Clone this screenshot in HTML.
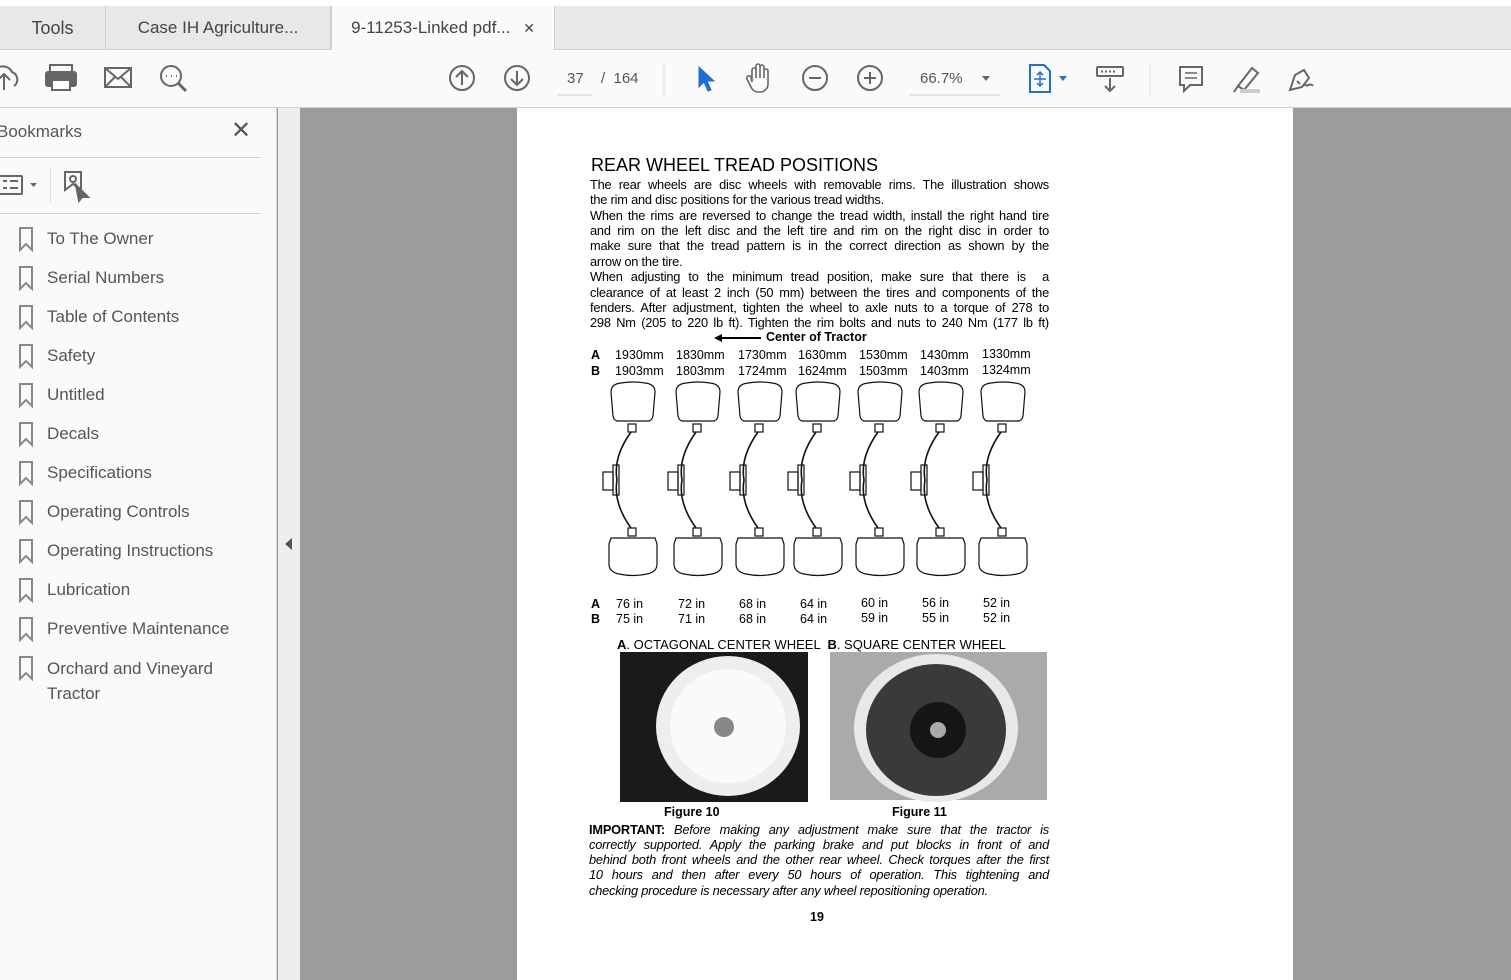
<!DOCTYPE html>
<html><head><meta charset="utf-8"><style>
*{margin:0;padding:0;box-sizing:border-box}
body{width:1511px;height:980px;overflow:hidden;background:#9c9c9c;font-family:"Liberation Sans",Arial,sans-serif;position:relative}
.a{position:absolute}
.ui{font-family:"Liberation Sans",sans-serif;color:#555}
.tab{position:absolute;top:6px;height:44px;line-height:44px;font-size:17px;color:#444;text-align:center;border-right:1px solid #d0d0d0}
.bm{position:absolute;left:47px;font-size:17px;color:#555}
.ln{position:absolute;left:590px;width:459px;font-size:12.8px;color:#000;text-align:justify;text-align-last:justify;white-space:nowrap;letter-spacing:-0.2px}
.ln.l{text-align-last:left}
.ti{position:absolute;left:589px;width:460px;font-size:12.8px;font-style:italic;text-align:justify;text-align-last:justify;white-space:nowrap;letter-spacing:-0.2px}
.r{position:absolute;font-size:12.5px;white-space:pre}
</style></head><body>
<div class="a" style="left:0;top:0;width:1511px;height:6px;background:#fff"></div>
<div class="a" style="left:0;top:6px;width:1511px;height:44px;background:#e8e8e8;border-bottom:1px solid #cfcfcf"></div>
<div class="tab" style="left:0;width:106px;font-size:18px">Tools</div>
<div class="tab" style="left:106px;width:225px">Case IH Agriculture...</div>
<div class="tab" style="left:331px;width:224px;background:#fafafa;height:45px;border-left:1px solid #cfcfcf">9-11253-Linked pdf... <span style="font-size:14px;margin-left:8px">✕</span></div>
<div class="a" style="left:0;top:50px;width:1511px;height:58px;background:#fafafa;border-bottom:1px solid #cfcfcf"></div>
<svg class="a" style="left:0;top:50px" width="1511" height="58" fill="none" stroke="#666" stroke-width="2">
<path d="M4 40 V24 M-2 30 L4 24 L10 30 M14 36 a8 8 0 0 0 -2 -14 a10 10 0 0 0 -18 0"/>
<rect x="50" y="15" width="22" height="8" /><rect x="46" y="22" width="30" height="14" rx="2" fill="#666"/><rect x="52" y="30" width="18" height="10" fill="#fff"/>
<rect x="105" y="18" width="26" height="19"/><path d="M105 18 L118 29 L131 18 M105 37 L115 27 M131 37 L121 27"/>
<circle cx="171" cy="26" r="10"/><path d="M178 33 L186 41" stroke-width="3"/><path d="M166 26h1M171 26h1M176 26h1" stroke-width="2"/>
<circle cx="462" cy="28" r="12"/><path d="M462 35V21M456 27l6-6 6 6"/>
<circle cx="517" cy="28" r="12"/><path d="M517 21v14M511 29l6 6 6-6"/>
<path d="M557 45h35" stroke="#ccc" stroke-width="1"/>
<path d="M664 14v32" stroke="#ddd" stroke-width="1"/>
<path d="M699 17 L699 37 L704 32 L708 41 L711 40 L707 31 L714 31 Z" fill="#1e6fd0" stroke="#1e6fd0" stroke-width="1"/>
<path d="M752 32 V20 a2 2 0 0 1 4 0 V28 V16 a2 2 0 0 1 4 0 V28 V17 a2 2 0 0 1 4 0 V28 V21 a2 2 0 0 1 4 0 V34 a8 8 0 0 1 -8 8 h-2 a8 8 0 0 1 -7 -5 l-4 -8 a2 2 0 0 1 4 -2 z" stroke-width="1.6"/>
<circle cx="815" cy="28" r="12"/><path d="M809 28h12"/>
<circle cx="870" cy="28" r="12"/><path d="M864 28h12M870 22v12"/>
<path d="M909 45h91" stroke="#ccc" stroke-width="1"/>
<path d="M982 26h8l-4 5z" fill="#666" stroke="none"/>
<path d="M1030 15h14l6 6v21h-20z" stroke="#1e6fd0"/><path d="M1040 22v14M1034 29h12M1037 25l3-3 3 3M1037 33l3 3 3-3" stroke="#1e6fd0" stroke-width="1.5"/>
<path d="M1059 26h8l-4 5z" fill="#1e6fd0" stroke="none"/>
<rect x="1097" y="17" width="26" height="9" rx="1"/><path d="M1101 21.5h2M1105 21.5h2M1109 21.5h2M1113 21.5h2"/><path d="M1110 28v13M1105 36l5 5 5-5"/>
<path d="M1150 14v32" stroke="#ddd" stroke-width="1"/>
<path d="M1180 17h22v18h-12l-6 6v-6h-4z"/><path d="M1185 23h12M1185 28h12" stroke-width="1.5"/>
<path d="M1238 36 L1252 18 L1258 23 L1244 40 Z M1234 42l4-6"/><rect x="1240" y="39" width="20" height="4" fill="#ccc" stroke="none"/>
<path d="M1290 40 L1295 25 L1304 20 L1309 28 L1302 37 Z M1297 31l3 3M1304 34c3 4 6-2 9 2"/>
</svg>
<div class="a ui" style="left:567px;top:70px;font-size:15px;color:#555">37</div>
<div class="a ui" style="left:601px;top:70px;font-size:15px;color:#555">/ &nbsp;164</div>
<div class="a ui" style="left:920px;top:70px;font-size:15px;color:#555">66.7%</div>
<!-- sidebar -->
<div class="a" style="left:0;top:108px;width:277px;height:872px;background:#fafafa;border-right:1px solid #d6d6d6"></div>
<div class="a" style="left:278px;top:108px;width:22px;height:872px;background:#eeeeee"></div>
<div class="a" style="left:285px;top:538px;width:0;height:0;border-top:6px solid transparent;border-bottom:6px solid transparent;border-right:7px solid #555"></div>
<div class="a ui" style="left:-3px;top:122px;font-size:17px">Bookmarks</div>
<div class="a ui" style="left:231px;top:116px;font-size:24px;color:#555">✕</div>
<div class="a" style="left:0;top:157px;width:261px;height:1px;background:#d6d6d6"></div>
<div class="a" style="left:0;top:213px;width:261px;height:1px;background:#d6d6d6"></div>
<div class="a" style="left:50px;top:168px;width:1px;height:34px;background:#ddd"></div>
<svg class="a" style="left:0;top:170px" width="100" height="34" fill="none" stroke="#666" stroke-width="2">
<rect x="-2" y="6" width="24" height="18" rx="1"/><path d="M3 11h4M3 18h4M10 11h8M10 18h8"/>
<path d="M30 13h7l-3.5 4z" fill="#666" stroke="none"/>
<path d="M65 2h16v18l-8 -6-8 6z"/><circle cx="73" cy="9" r="3"/><path d="M76 15l12 12h-6l-3 4z" fill="#666"/>
</svg>
<svg class="a" style="left:19px;top:227px" width="14" height="480" fill="none" stroke="#888" stroke-width="2">
<path id="b" d="M1 1h12v22l-6-6-6 6z"/>
<use href="#b" y="39"/><use href="#b" y="78"/><use href="#b" y="117"/><use href="#b" y="156"/><use href="#b" y="195"/><use href="#b" y="234"/><use href="#b" y="273"/><use href="#b" y="312"/><use href="#b" y="351"/><use href="#b" y="390"/><use href="#b" y="429"/>
</svg>
<div class="bm" style="top:229px">To The Owner</div>
<div class="bm" style="top:268px">Serial Numbers</div>
<div class="bm" style="top:307px">Table of Contents</div>
<div class="bm" style="top:346px">Safety</div>
<div class="bm" style="top:385px">Untitled</div>
<div class="bm" style="top:424px">Decals</div>
<div class="bm" style="top:463px">Specifications</div>
<div class="bm" style="top:502px">Operating Controls</div>
<div class="bm" style="top:541px">Operating Instructions</div>
<div class="bm" style="top:580px">Lubrication</div>
<div class="bm" style="top:619px">Preventive Maintenance</div>
<div class="bm" style="top:656px;line-height:25px">Orchard and Vineyard<br>Tractor</div>
<!-- page -->
<div class="a" style="left:517px;top:108px;width:776px;height:872px;background:#fff"></div>
<div class="a" style="left:1500px;top:108px;width:11px;height:872px;background:#9c9c9c"></div>
<div class="a" style="left:591px;top:155px;font-size:18px;color:#000">REAR WHEEL TREAD POSITIONS</div>
<div class="ln" style="top:177px">The rear wheels are disc wheels with removable rims. The illustration shows</div>
<div class="ln l" style="top:192px">the rim and disc positions for the various tread widths.</div>
<div class="ln" style="top:208px">When the rims are reversed to change the tread width, install the right hand tire</div>
<div class="ln" style="top:223px">and rim on the left disc and the left tire and rim on the right disc in order to</div>
<div class="ln" style="top:238px">make sure that the tread pattern is in the correct direction as shown by the</div>
<div class="ln l" style="top:254px">arrow on the tire.</div>
<div class="ln" style="top:269px">When adjusting to the minimum tread position, make sure that there is &nbsp;a</div>
<div class="ln" style="top:285px">clearance of at least 2 inch (50 mm) between the tires and components of the</div>
<div class="ln" style="top:300px">fenders. After adjustment, tighten the wheel to axle nuts to a torque of 278 to</div>
<div class="ln" style="top:315px">298 Nm (205 to 220 lb ft). Tighten the rim bolts and nuts to 240 Nm (177 lb ft)</div>
<div class="a" style="left:716px;top:337px;width:45px;height:1.5px;background:#000"></div>
<div class="a" style="left:714px;top:334px;border-top:4px solid transparent;border-bottom:4px solid transparent;border-right:8px solid #000"></div>
<div class="r" style="left:766px;top:330px;font-weight:bold">Center of Tractor</div>
<div class="r" style="left:591px;top:348px;font-weight:bold">A</div>
<div class="r" style="left:591px;top:364px;font-weight:bold">B</div>
<div class="r" style="left:615px;top:348px">1930mm</div><div class="r" style="left:676px;top:348px">1830mm</div><div class="r" style="left:738px;top:348px">1730mm</div><div class="r" style="left:798px;top:348px">1630mm</div><div class="r" style="left:859px;top:348px">1530mm</div><div class="r" style="left:920px;top:348px">1430mm</div><div class="r" style="left:982px;top:347px">1330mm</div>
<div class="r" style="left:615px;top:364px">1903mm</div><div class="r" style="left:676px;top:364px">1803mm</div><div class="r" style="left:738px;top:364px">1724mm</div><div class="r" style="left:798px;top:364px">1624mm</div><div class="r" style="left:859px;top:364px">1503mm</div><div class="r" style="left:920px;top:364px">1403mm</div><div class="r" style="left:982px;top:363px">1324mm</div>
<svg class="a" style="left:580px;top:380px" width="470" height="205" fill="none" stroke="#111" stroke-width="1.2">
<defs><g id="w">
<path d="M-22 12 q0-8 10-9 q12-2 24 0 q10 1 10 9 l-2 24 q-1 5 -5 5 h-30 q-4 0 -5-5z"/>
<path d="M-22 158 h44 l2 6 v20 q0 8-10 10 q-14 3 -28 0 q-10-2 -10-10 v-20z"/>
<rect x="-5" y="44" width="8" height="8"/><rect x="-5" y="148" width="8" height="8"/>
<path d="M-2 52 q-18 25 -14 48 q-4 23 14 48" stroke-width="1.6"/>
<rect x="-20" y="85" width="6" height="30"/><rect x="-30" y="92" width="10" height="18"/>
</g></defs>
<use href="#w" x="53"/><use href="#w" x="118"/><use href="#w" x="180"/><use href="#w" x="238"/><use href="#w" x="300"/><use href="#w" x="361"/><use href="#w" x="423"/>
</svg>
<div class="r" style="left:591px;top:597px;font-weight:bold">A</div>
<div class="r" style="left:591px;top:612px;font-weight:bold">B</div>
<div class="r" style="left:616px;top:597px">76 in</div><div class="r" style="left:678px;top:597px">72 in</div><div class="r" style="left:739px;top:597px">68 in</div><div class="r" style="left:800px;top:597px">64 in</div><div class="r" style="left:861px;top:596px">60 in</div><div class="r" style="left:922px;top:596px">56 in</div><div class="r" style="left:983px;top:596px">52 in</div>
<div class="r" style="left:616px;top:612px">75 in</div><div class="r" style="left:678px;top:612px">71 in</div><div class="r" style="left:739px;top:612px">68 in</div><div class="r" style="left:800px;top:612px">64 in</div><div class="r" style="left:861px;top:611px">59 in</div><div class="r" style="left:922px;top:611px">55 in</div><div class="r" style="left:983px;top:611px">52 in</div>
<div class="r" style="left:617px;top:637px;font-size:13px"><b>A</b>. OCTAGONAL CENTER WHEEL  <b>B</b>. SQUARE CENTER WHEEL</div>
<svg class="a" style="left:618px;top:652px" width="432" height="152">
<rect x="2" y="0" width="188" height="150" fill="#1a1a1a"/>
<ellipse cx="110" cy="74" rx="72" ry="70" fill="#eee"/>
<ellipse cx="110" cy="74" rx="58" ry="57" fill="#fafafa"/>
<circle cx="106" cy="75" r="10" fill="#888"/>
<rect x="212" y="0" width="217" height="148" fill="#aaa"/>
<ellipse cx="318" cy="76" rx="82" ry="74" fill="#e8e8e8"/>
<ellipse cx="318" cy="78" rx="70" ry="66" fill="#3a3a3a"/>
<circle cx="320" cy="78" r="28" fill="#151515"/><circle cx="320" cy="78" r="8" fill="#aaa"/>
</svg>
<div class="r" style="left:664px;top:805px;font-weight:bold">Figure 10</div>
<div class="r" style="left:892px;top:805px;font-weight:bold">Figure 11</div>
<div class="ti" style="top:822px"><b style="font-style:normal">IMPORTANT:</b> Before making any adjustment make sure that the tractor is</div>
<div class="ti" style="top:837px">correctly supported. Apply the parking brake and put blocks in front of and</div>
<div class="ti" style="top:852px">behind both front wheels and the other rear wheel. Check torques after the first</div>
<div class="ti" style="top:867px">10 hours and then after every 50 hours of operation. This tightening and</div>
<div class="ti" style="top:883px;text-align-last:left">checking procedure is necessary after any wheel repositioning operation.</div>
<div class="r" style="left:810px;top:910px;font-weight:bold">19</div>
</body></html>
